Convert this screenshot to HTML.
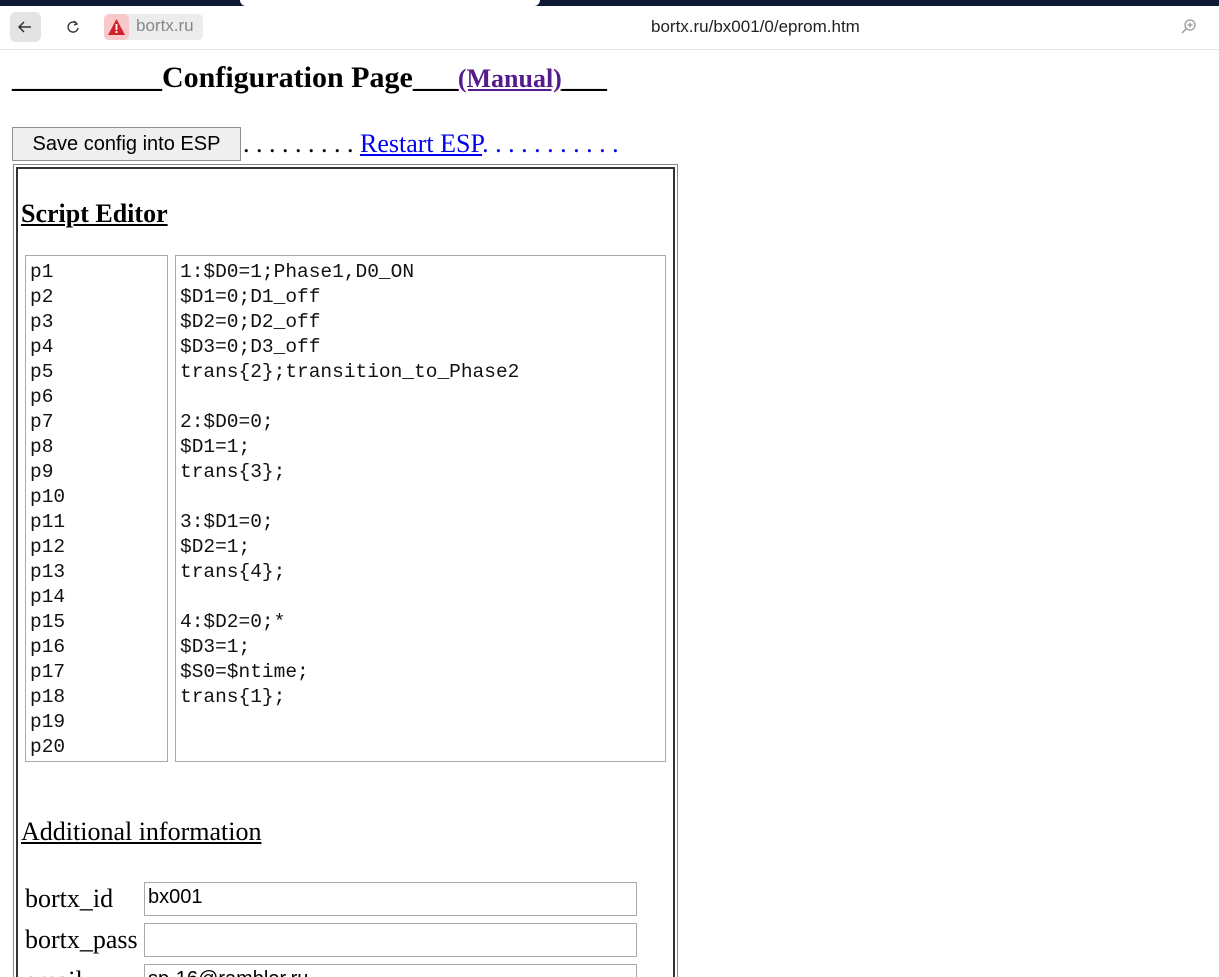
<!DOCTYPE html>
<html style="overflow:hidden;height:977px"><head><meta charset="utf-8"><style>
body{margin:0;width:1219px;height:977px;overflow:hidden;background:#fff;position:relative;font-family:"Liberation Serif",serif}
.a{position:absolute}
.top{left:0;top:0;width:1219px;height:6px;background:#0c1a33}
.bar{left:0;top:6px;width:1219px;height:43px;background:#fff;border-bottom:1px solid #e6e6e6;border-radius:8px 8px 0 0}
.mono{font-family:"Liberation Mono",monospace;font-size:19.5px;line-height:25px;color:#111;white-space:pre}
.ta{border:1px solid #a9a9a9;background:#fff}
.inp{border:1px solid #a9a9a9;height:34px;box-sizing:border-box;font-family:"Liberation Sans",sans-serif;font-size:20px;padding:3px 3px}
.lbl{font-size:26px;color:#000}
</style></head><body>
<div class="a top"></div>
<div class="a" style="left:240px;top:0;width:300px;height:6px;background:#fff;border-radius:0 0 6px 6px"></div>
<div class="a bar"></div>
<div class="a" style="left:10px;top:12px;width:31px;height:30px;background:#e4e4e4;border-radius:6px"></div>
<svg class="a" style="left:16px;top:18px" width="18" height="18"><path d="M15 9H3M8 4L3 9l5 5" stroke="#333" stroke-width="1.5" fill="none"/></svg>
<svg class="a" style="left:64px;top:18px" width="18" height="18"><path d="M13 6A5 5 0 1 0 14 10" stroke="#333" stroke-width="1.4" fill="none"/><path d="M10 3l3 3-3 1" stroke="#333" stroke-width="1.4" fill="none"/></svg>
<div class="a" style="left:104px;top:14px;width:99px;height:26px;background:#ececec;border-radius:5px"></div>
<div class="a" style="left:104px;top:14px;width:25px;height:26px;background:#f8c9cb;border-radius:5px"></div>
<svg class="a" style="left:106px;top:17px" width="21" height="20"><path d="M10.5 2L19 18H2z" fill="#d4202a"/><rect x="9.6" y="7" width="1.8" height="6" fill="#fff"/><rect x="9.6" y="14" width="1.8" height="2" fill="#fff"/></svg>
<div class="a" style="left:136px;top:16px;font-family:'Liberation Sans',sans-serif;font-size:17px;color:#888">bortx.ru</div>
<div class="a" style="left:651px;top:17px;font-family:'Liberation Sans',sans-serif;font-size:17px;color:#222">bortx.ru/bx001/0/eprom.htm</div>
<svg class="a" style="left:1180px;top:18px" width="18" height="18"><circle cx="10" cy="7" r="5" stroke="#999" stroke-width="1.3" fill="none"/><path d="M6 11l-4 4M10 4.5v5M7.5 7h5" stroke="#999" stroke-width="1.3"/></svg>

<div class="a" style="left:12px;top:61px;font-size:30px;font-weight:bold;white-space:nowrap">__________Configuration Page___<a style="color:#551a8b;font-size:26px;text-decoration:underline">(Manual)</a>___</div>

<div class="a" style="left:12px;top:127px;width:229px;height:34px;box-sizing:border-box;border:1px solid #8f8f8f;background:#efefef;font-family:'Liberation Sans',sans-serif;font-size:20px;line-height:32px;text-align:center;color:#000">Save config into ESP</div>
<div class="a" style="left:243px;top:129px;font-size:26px;white-space:nowrap;color:#000">. . . . . . . . . <span style="color:#0000ee;text-decoration:underline">Restart ESP</span><span style="color:#0000ee">. . . . . . . . . . .</span></div>

<div class="a" style="left:13px;top:164px;width:665px;height:830px;box-sizing:border-box;border:1px solid #888"></div>
<div class="a" style="left:16px;top:167px;width:659px;height:830px;box-sizing:border-box;border:2px solid #333"></div>

<div class="a" style="left:21px;top:199px;font-size:26px;font-weight:bold;text-decoration:underline">Script Editor</div>

<div class="a ta" style="left:25px;top:255px;width:141px;height:505px"></div>
<div class="a mono" style="left:30px;top:260px">p1
p2
p3
p4
p5
p6
p7
p8
p9
p10
p11
p12
p13
p14
p15
p16
p17
p18
p19
p20</div>
<div class="a ta" style="left:175px;top:255px;width:489px;height:505px"></div>
<div class="a mono" style="left:180px;top:260px">1:$D0=1;Phase1,D0_ON
$D1=0;D1_off
$D2=0;D2_off
$D3=0;D3_off
trans{2};transition_to_Phase2

2:$D0=0;
$D1=1;
trans{3};

3:$D1=0;
$D2=1;
trans{4};

4:$D2=0;*
$D3=1;
$S0=$ntime;
trans{1};</div>

<div class="a" style="left:21px;top:817px;font-size:26px;text-decoration:underline">Additional information</div>

<div class="a lbl" style="left:25px;top:884px">bortx_id</div>
<div class="a inp" style="left:144px;top:882px;width:493px">bx001</div>
<div class="a lbl" style="left:25px;top:925px">bortx_pass</div>
<div class="a inp" style="left:144px;top:923px;width:493px"></div>
<div class="a lbl" style="left:25px;top:966px">email</div>
<div class="a inp" style="left:144px;top:964px;width:493px">sp-16@rambler.ru</div>
</body></html>
